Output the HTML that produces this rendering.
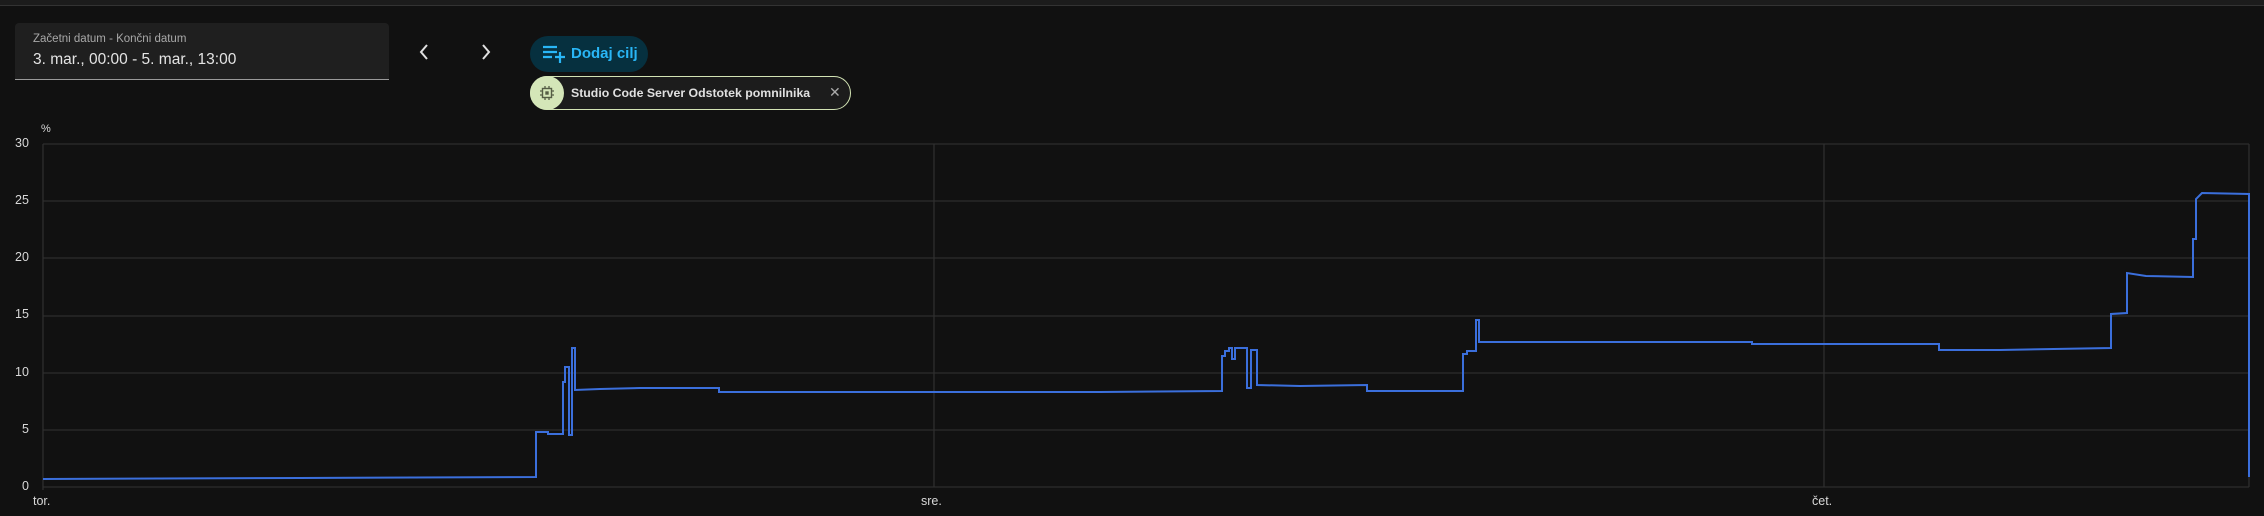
<!DOCTYPE html>
<html><head><meta charset="utf-8"><style>
body{margin:0;width:2264px;height:516px;background:#111111;overflow:hidden;font-family:"Liberation Sans",sans-serif;position:relative}
.top{position:absolute;left:0;top:0;width:2264px;height:5px;background:#1c1c1c;border-bottom:1px solid #333}
.picker{position:absolute;left:15px;top:23px;width:374px;height:56px;background:#1f1f1f;border-radius:4px 4px 0 0;border-bottom:1px solid #9a9a9a}
.picker .l{position:absolute;left:18px;top:10px;font-size:11.5px;color:#a8a8a8}
.picker .v{position:absolute;left:18px;top:28px;font-size:15.5px;color:#e4e4e4}
.chev{position:absolute;top:40px;color:#e0e0e0}
.btn{position:absolute;left:530px;top:36px;width:118px;height:36px;border-radius:18px;background:#06303f;color:#29b6f6;font-weight:bold;font-size:15px}
.btn span{position:absolute;left:41px;top:9px}
.chip{position:absolute;left:530px;top:76px;width:319px;height:32px;border:1px solid #d2e3b4;border-radius:17px;background:#1c1c1c}
.chip .ic{position:absolute;left:-1px;top:-1px;width:34px;height:34px;border-radius:17px;background:#d4e6b8}
.chip .t{position:absolute;left:40px;top:9px;font-size:12.3px;font-weight:bold;color:#e0e0e0}
.chip .x{position:absolute;left:298px;top:7px;font-size:14px;color:#aaa}
.ax{position:absolute;font-size:12.5px;color:#d8d8d8}
</style></head><body>
<div class="top"></div>
<div class="picker"><div class="l">Začetni datum - Končni datum</div><div class="v">3. mar., 00:00 - 5. mar., 13:00</div></div>
<svg class="chev" style="left:416px" width="16" height="24" viewBox="0 0 16 24"><path d="M11 5 L5 12 L11 19" fill="none" stroke="#e0e0e0" stroke-width="2"/></svg>
<svg class="chev" style="left:478px" width="16" height="24" viewBox="0 0 16 24"><path d="M5 5 L11 12 L5 19" fill="none" stroke="#e0e0e0" stroke-width="2"/></svg>
<div class="btn"><svg style="position:absolute;left:12px;top:8px" width="24" height="20" viewBox="0 0 24 20"><path d="M1 3h14M1 8h14M1 13h9M13 13h10M18 8v11" stroke="#29b6f6" stroke-width="2.2" fill="none"/></svg><span>Dodaj cilj</span></div>
<div class="chip"><div class="ic"><svg style="position:absolute;left:9px;top:9px" width="16" height="16" viewBox="0 0 16 16"><rect x="3.5" y="3.5" width="9" height="9" fill="none" stroke="#555d45" stroke-width="1.4"/><rect x="6.3" y="6.3" width="3.4" height="3.4" fill="#555d45"/><path d="M6 1v2M10 1v2M6 13v2M10 13v2M1 6h2M1 10h2M13 6h2M13 10h2" stroke="#555d45" stroke-width="1.3"/></svg></div><div class="t">Studio Code Server Odstotek pomnilnika</div><div class="x">✕</div></div>
<div class="ax" style="left:41px;top:123px;font-size:11px">%</div>
<div class="ax" style="left:15px;top:136px">30</div>
<div class="ax" style="left:15px;top:193px">25</div>
<div class="ax" style="left:15px;top:250px">20</div>
<div class="ax" style="left:15px;top:307px">15</div>
<div class="ax" style="left:15px;top:365px">10</div>
<div class="ax" style="left:22px;top:422px">5</div>
<div class="ax" style="left:22px;top:479px">0</div>
<div class="ax" style="left:33px;top:494px">tor.</div>
<div class="ax" style="left:921px;top:494px">sre.</div>
<div class="ax" style="left:1812px;top:494px">čet.</div>
<svg style="position:absolute;left:0;top:0" width="2264" height="516">
<g stroke="#2e2e2e" stroke-width="1.3">
<path d="M43 144H2249M43 201H2249M43 258H2249M43 316H2249M43 373H2249M43 430H2249M43 487H2249"/>
<path d="M43 144V490M934 144V487M1824 144V487M2249 144V487"/>
</g>
<polyline fill="none" stroke="#3b6fdc" stroke-width="2" points="43,479 300,478 536,477 536,432 548,432 548,434 563,434 563,382 565,382 565,367 569,367 569,435 572,435 572,348 575,348 575,390 600,389 640,388 719,388 719,392 800,392 900,392 1000,392 1100,392 1222,391 1222,356 1225,356 1225,351 1229,351 1229,348 1232,348 1232,359 1235,359 1235,348 1247,348 1247,388 1251,388 1251,350 1257,350 1257,385 1300,386 1367,385 1367,391 1463,391 1463,354 1467,354 1467,351 1476,351 1476,320 1479,320 1479,342 1550,342 1650,342 1752,342 1752,344 1850,344 1939,344 1939,350 2000,350 2111,348 2111,314 2127,313 2127,273 2146,276 2193,277 2193,239 2196,239 2196,199 2202,193 2249,194 2249,477"/>
</svg>
</body></html>
